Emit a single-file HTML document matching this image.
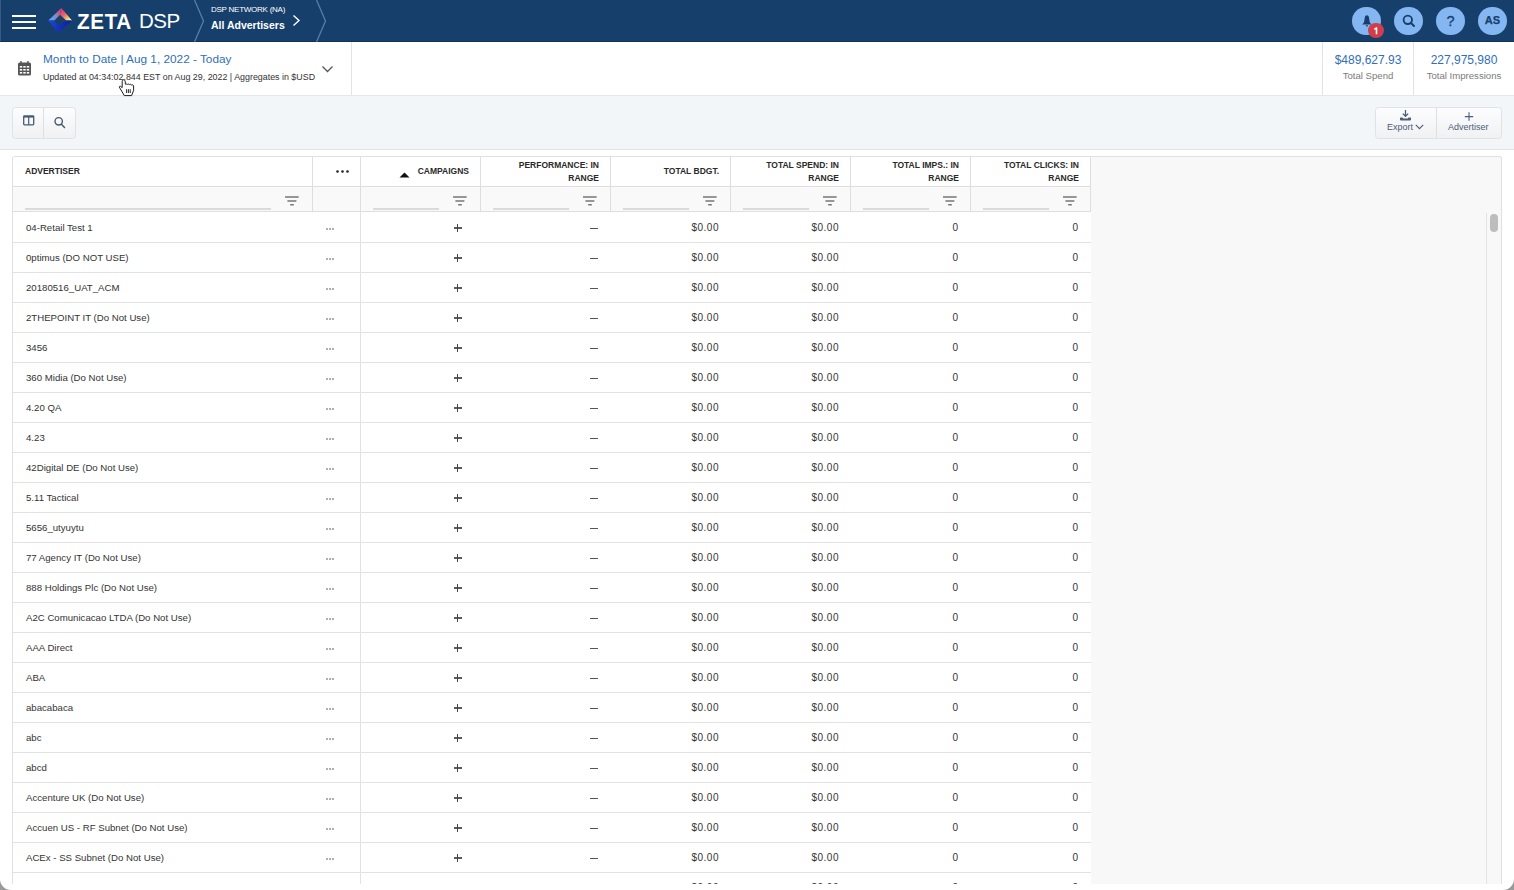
<!DOCTYPE html>
<html><head><meta charset="utf-8"><style>
*{box-sizing:border-box;margin:0;padding:0}
html,body{width:1514px;height:890px;overflow:hidden;background:#fff;font-family:"Liberation Sans",sans-serif;color:#333}
.abs{position:absolute}
#nav{position:absolute;left:0;top:0;width:1514px;height:42px;background:#173f6c;border-bottom:1px solid #11325a}
#nav .edge{position:absolute;left:0;top:0;width:1px;height:41px;background:#3a5a85}
.hb{position:absolute;left:12px;width:24px;height:2px;background:#fff}
#logo-zeta{position:absolute;left:76.5px;top:7.5px;font-size:22.8px;font-weight:700;color:#fff;letter-spacing:0.7px;line-height:26px;transform:scaleX(0.905);transform-origin:0 0}
#logo-dsp{position:absolute;left:139px;top:8.5px;font-size:20.5px;font-weight:400;color:#fff;letter-spacing:-0.5px;line-height:24px}
#net1{position:absolute;left:211px;top:4px;font-size:8px;color:#fff;letter-spacing:-0.25px;line-height:12px}
#net2{position:absolute;left:211px;top:18px;font-size:10.5px;font-weight:700;color:#fff;line-height:14px}
.circ{position:absolute;top:6.5px;width:28.8px;height:28.8px;border-radius:50%;background:#84b7f2}
#badge{position:absolute;left:1368px;top:22.7px;width:15.6px;height:15.6px;border-radius:50%;background:#cf3e4a;color:#fff;font-size:10px;font-weight:700;text-align:center;line-height:15.6px}
#datebar{position:absolute;left:0;top:42px;width:1514px;height:54px;background:#fff;border-bottom:1px solid #e3e6ea}
.vsep{position:absolute;top:42px;width:1px;height:53px;background:#e3e3e3}
#d1{position:absolute;left:43px;top:52px;font-size:11.8px;color:#2f6fba;line-height:15px}
#d2{position:absolute;left:43px;top:71px;font-size:8.9px;color:#333;line-height:12px}
.stat{position:absolute;text-align:center;line-height:14px}
.stat .v{font-size:12px;color:#2f6fba}
.stat .l{font-size:9.6px;color:#7b7b7b;margin-top:2px}
#toolbar{position:absolute;left:0;top:96px;width:1514px;height:54px;background:#f2f6f9;border-bottom:1px solid #e0e3e7}
.btngrp{position:absolute;top:107px;height:32px;border:1px solid #e0e3e6;border-radius:3.5px;background:linear-gradient(#fdfdfe,#eff1f3)}
.btnsep{position:absolute;top:0;width:1px;height:30px;background:#dcdfe3}
#tablewrap{position:absolute;left:12px;top:156px;width:1490px;height:728px;border:1px solid #e0e0e0;border-bottom:0;border-radius:3px 3px 0 0;background:#f8f8f8;overflow:hidden}
#thead{position:absolute;left:0;top:0;width:1078px;height:55px;background:#fff}
.th{position:absolute;top:0;height:30px;border-right:1px solid #dedede;border-bottom:1px solid #dedede;font-size:8.5px;font-weight:700;color:#2a2a2a;letter-spacing:0;line-height:13px;text-align:right}
.th span{position:absolute;right:11px;top:2px;white-space:nowrap}
.th.one span{top:8px}
.tf{position:absolute;top:30px;height:25px;border-right:1px solid #dedede;border-bottom:1px solid #dedede;background:#f9f9f9}
.ul{position:absolute;top:21px;height:2px;background:#dadada}
.flt{position:absolute;top:10px;width:14px;height:10px}
#tbody{position:absolute;left:0;top:55px;width:1078px;height:672px;background:#fff;overflow:hidden}
.row{position:absolute;left:0;width:1078px;height:30px;border-bottom:1px solid #e2e2e2}
.c{position:absolute;top:0;height:29px;line-height:29px;font-size:9.5px;color:#333;white-space:nowrap}
.c.name{left:13px;font-size:9.65px}
.c.dots{left:313px;top:15px;width:2px;height:2px;background:#b0b0b0;box-shadow:3px 0 0 #b0b0b0,6px 0 0 #b0b0b0}
.c.plus{left:347px;width:120px;height:29px;border-left:1px solid #e2e2e2}
.c.plus:before{content:"";position:absolute;left:92.5px;top:14.4px;width:8px;height:1.2px;background:#5a5a5a}
.c.plus:after{content:"";position:absolute;left:96.1px;top:11px;width:1.05px;height:7.7px;background:#444}
.c.dash:before{content:"";position:absolute;left:577px;top:15px;width:8px;height:1px;background:#555}
.c.num{text-align:right;font-size:10px;letter-spacing:0.5px;top:0}
.c4{right:372px}.c5{right:252px}.c6{right:132.5px}.c7{right:12.5px}
#vscroll{position:absolute;left:1473px;top:56px;width:15px;height:680px;border-left:1px solid #e3e3e3;background:#f8f8f8}
#thumb{position:absolute;left:3px;top:1px;width:8px;height:18px;border-radius:4px;background:#bdbdbd}

#vline{position:absolute;left:347px;top:0;width:1px;height:700px;background:#e2e2e2}

</style></head><body>
<div id="nav">
  <div class="edge"></div>
  <div class="hb" style="top:15px"></div><div class="hb" style="top:21px"></div><div class="hb" style="top:27px"></div>
  <svg class="abs" style="left:44px;top:4px" width="32" height="32" viewBox="0 0 32 32">
    <defs>
      <linearGradient id="lg1" x1="4" y1="16" x2="17" y2="4" gradientUnits="userSpaceOnUse">
        <stop offset="0" stop-color="#48b4f4"/><stop offset="0.5" stop-color="#8888b8"/><stop offset="1" stop-color="#d8307a"/>
      </linearGradient>
      <linearGradient id="lg2" x1="17" y1="4" x2="28" y2="16.5" gradientUnits="userSpaceOnUse">
        <stop offset="0" stop-color="#d82a78"/><stop offset="0.45" stop-color="#e86a6a"/><stop offset="0.8" stop-color="#f0e070"/><stop offset="1" stop-color="#ffffff"/>
      </linearGradient>
    </defs>
    <path d="M4.3 16.5 L17.3 4 L16 10.8 L10.4 16.5 Z" fill="url(#lg1)"/>
    <path d="M17.3 4 L28 16.5 L22.3 16.5 L16 10.8 Z" fill="url(#lg2)"/>
    <linearGradient id="lg3" x1="4" y1="16" x2="28" y2="22" gradientUnits="userSpaceOnUse"><stop offset="0" stop-color="#2048e0"/><stop offset="1" stop-color="#0a1a98"/></linearGradient>
    <path d="M4.3 16.5 L28 16.5 L14.4 28.4 Z M10.4 16.5 L14.4 22.3 L22.3 16.5 Z" fill="url(#lg3)" fill-rule="evenodd"/>
  </svg>
  <div id="logo-zeta">ZETA</div>
  <div id="logo-dsp">DSP</div>
  <svg class="abs" style="left:190px;top:0" width="140" height="42" viewBox="0 0 140 42">
    <path d="M4.5 0 L13.5 21 L4.5 42" fill="none" stroke="#5a7cab" stroke-width="1.3"/>
    <path d="M126.5 0 L135.5 21 L126.5 42" fill="none" stroke="#5a7cab" stroke-width="1.3"/>
    <path d="M103.5 15.5 L109 20.5 L103.5 25.5" fill="none" stroke="#fff" stroke-width="1.4"/>
  </svg>
  <div id="net1">DSP NETWORK (NA)</div>
  <div id="net2">All Advertisers</div>
  <div class="circ" style="left:1352px"></div>
  <div class="circ" style="left:1394px"></div>
  <div class="circ" style="left:1436px"></div>
  <div class="circ" style="left:1478px"></div>
  <svg class="abs" style="left:1360px;top:14px" width="14" height="14" viewBox="0 0 14 14">
    <path d="M6.9 1.2 C5.6 1.2 5 2.2 4.8 3.6 L4.2 7.4 C4 8.6 3.2 9.4 2.3 10.2 L2.3 10.6 L11.5 10.6 L11.5 10.2 C10.6 9.4 9.8 8.6 9.6 7.4 L9 3.6 C8.8 2.2 8.2 1.2 6.9 1.2 Z" fill="#173f6c"/>
    <path d="M5.7 11.2 L8.1 11.2 L7.6 12.4 L6.2 12.4 Z" fill="#173f6c"/>
  </svg>
  <div id="badge"><svg style="position:absolute;left:0;top:0" width="16" height="16" viewBox="0 0 16 16"><path d="M6.4 6.3 L8.5 4.9 L8.5 11.3" fill="none" stroke="#fff" stroke-width="1.6" stroke-linejoin="round"/></svg></div>
  <svg class="abs" style="left:1401px;top:13px" width="16" height="16" viewBox="0 0 16 16">
    <circle cx="6.8" cy="6.8" r="4.2" fill="none" stroke="#173f6c" stroke-width="1.9"/>
    <path d="M9.8 9.8 L13 13" stroke="#173f6c" stroke-width="2" stroke-linecap="round"/>
  </svg>
  <div class="abs" style="left:1436px;top:6.8px;width:29px;height:29px;text-align:center;line-height:29px;font-size:14.5px;font-weight:400;color:#173f6c;-webkit-text-stroke:0.3px #173f6c">?</div>
  <div class="abs" style="left:1478px;top:5.8px;width:29px;height:29px;text-align:center;line-height:29px;font-size:11px;font-weight:700;color:#173f6c;-webkit-text-stroke:0.25px #173f6c">AS</div>
</div>

<div id="datebar"></div>
<svg class="abs" style="left:17px;top:60px" width="15" height="16" viewBox="0 0 15 16">
  <path d="M4 1 L4 3 M11 1 L11 3" stroke="#555" stroke-width="1.4"/>
  <rect x="1" y="2.5" width="13" height="13" rx="1.5" fill="#555"/>
  <g fill="#fff">
    <rect x="2.8" y="6" width="2.4" height="1.6"/><rect x="6.3" y="6" width="2.4" height="1.6"/><rect x="9.8" y="6" width="2.4" height="1.6"/>
    <rect x="2.8" y="9" width="2.4" height="1.6"/><rect x="6.3" y="9" width="2.4" height="1.6"/><rect x="9.8" y="9" width="2.4" height="1.6"/>
    <rect x="2.8" y="12" width="2.4" height="1.6"/><rect x="6.3" y="12" width="2.4" height="1.6"/><rect x="9.8" y="12" width="2.4" height="1.6"/>
  </g>
</svg>
<div id="d1">Month to Date | Aug 1, 2022 - Today</div>
<div id="d2">Updated at 04:34:02.844 EST on Aug 29, 2022 | Aggregates in $USD</div>
<svg class="abs" style="left:117px;top:78px;z-index:50" width="18" height="19" viewBox="0 0 18 19">
  <path d="M6.5 1.8 C5.6 1.8 5.2 2.6 5.2 3.4 L5.2 9.6 L3.6 8.4 C3 8 2.2 8.3 2.3 9.1 L7.3 17.6 L14.6 17.6 L16.6 12.4 L16.6 7.9 C16.6 7 15.2 6.6 14.5 7.1 C14.3 6.2 12.9 6 12.4 6.7 C12.1 5.9 10.8 5.8 10.3 6.5 C10.2 6.1 9.6 6 8.4 6.2 L8.2 3.4 C8.1 2.4 7.5 1.8 6.5 1.8 Z" fill="#fff" stroke="#111" stroke-width="0.95" stroke-linejoin="round"/>
  <path d="M9.6 11.2 L9.6 15 M11.4 11.2 L11.4 15 M13.2 11.2 L13.2 15" stroke="#111" stroke-width="0.9"/>
</svg>
<svg class="abs" style="left:321px;top:65px" width="13" height="9" viewBox="0 0 13 9">
  <path d="M1.5 1.5 L6.5 6.5 L11.5 1.5" fill="none" stroke="#555" stroke-width="1.3"/>
</svg>
<div class="vsep" style="left:351px"></div>
<div class="vsep" style="left:1322px"></div>
<div class="vsep" style="left:1413px"></div>
<div class="stat" style="left:1323px;top:53px;width:90px"><div class="v">$489,627.93</div><div class="l">Total Spend</div></div>
<div class="stat" style="left:1414px;top:53px;width:100px"><div class="v">227,975,980</div><div class="l">Total Impressions</div></div>

<div id="toolbar"></div>
<div class="btngrp" style="left:12px;width:64px"><div class="btnsep" style="left:30px"></div></div>
<svg class="abs" style="left:23px;top:115px" width="12" height="11" viewBox="0 0 12 11">
  <rect x="0.7" y="0.8" width="10" height="9" rx="0.8" fill="none" stroke="#4a5a70" stroke-width="1.3"/>
  <path d="M0.7 1.8 L10.7 1.8" stroke="#4a5a70" stroke-width="1.6"/>
  <path d="M5.7 1.5 L5.7 9.8" stroke="#4a5a70" stroke-width="1.2"/>
</svg>
<svg class="abs" style="left:53px;top:116px" width="13" height="13" viewBox="0 0 13 13">
  <circle cx="5.7" cy="5.3" r="3.7" fill="none" stroke="#4a5a70" stroke-width="1.4"/>
  <path d="M8.4 8.2 L11.5 11.4" stroke="#4a5a70" stroke-width="1.5" stroke-linecap="round"/>
</svg>
<div class="btngrp" style="left:1375px;width:127px"><div class="btnsep" style="left:60px"></div></div>
<svg class="abs" style="left:1399px;top:109px" width="13" height="13" viewBox="0 0 13 13">
  <path d="M6.5 1 L6.5 7 M3.8 4.6 L6.5 7.3 L9.2 4.6" fill="none" stroke="#4e5e76" stroke-width="1.3"/>
  <path d="M1 9 L1 10.6 Q1 11.6 2 11.6 L11 11.6 Q12 11.6 12 10.6 L12 9 Q12 8.6 11.6 8.6 L9.6 8.6 L8.6 9.6 L4.4 9.6 L3.4 8.6 L1.4 8.6 Q1 8.6 1 9 Z" fill="#4e5e76"/>
</svg>
<div class="abs" style="left:1387px;top:122px;font-size:9px;color:#4e5e76;line-height:11px">Export</div>
<svg class="abs" style="left:1415px;top:124px" width="9" height="6" viewBox="0 0 9 6">
  <path d="M0.8 0.8 L4.5 4.6 L8.2 0.8" fill="none" stroke="#4e5e76" stroke-width="1.1"/>
</svg>
<svg class="abs" style="left:1464px;top:112px" width="10" height="10" viewBox="0 0 10 10">
  <path d="M5 0.3 L5 8.8 M0.8 4.6 L9.2 4.6" stroke="#4e5e76" stroke-width="1.1"/>
</svg>
<div class="abs" style="left:1448px;top:122px;font-size:9px;color:#4e5e76;line-height:11px">Advertiser</div>

<div id="tablewrap">
  <div id="thead">
    <div class="th" style="left:0;width:300px;text-align:left"><span style="left:12px;right:auto;top:8px">ADVERTISER</span></div>
    <div class="th" style="left:300px;width:48px"></div>
    <div class="th one" style="left:348px;width:120px"><span>CAMPAIGNS</span></div>
    <div class="th" style="left:468px;width:130px"><span>PERFORMANCE: IN<br>RANGE</span></div>
    <div class="th one" style="left:598px;width:120px"><span>TOTAL BDGT.</span></div>
    <div class="th" style="left:718px;width:120px"><span>TOTAL SPEND: IN<br>RANGE</span></div>
    <div class="th" style="left:838px;width:120px"><span>TOTAL IMPS.: IN<br>RANGE</span></div>
    <div class="th" style="left:958px;width:120px"><span>TOTAL CLICKS: IN<br>RANGE</span></div>
    <svg class="abs" style="left:323px;top:13px" width="14" height="4" viewBox="0 0 14 4">
      <circle cx="1.5" cy="1.5" r="1.3" fill="#222"/><circle cx="6.5" cy="1.5" r="1.3" fill="#222"/><circle cx="11.5" cy="1.5" r="1.3" fill="#222"/>
    </svg>
    <svg class="abs" style="left:386px;top:15px" width="11" height="6" viewBox="0 0 11 6">
      <path d="M0.5 5.5 L5.5 0.5 L10.5 5.5 Z" fill="#111"/>
    </svg>
    <div class="tf" style="left:0;width:300px"><div class="ul" style="left:12px;width:246px"></div></div>
    <div class="tf" style="left:300px;width:48px"></div>
    <div class="tf" style="left:348px;width:120px"><div class="ul" style="left:12px;width:66px"></div></div>
    <div class="tf" style="left:468px;width:130px"><div class="ul" style="left:12px;width:76px"></div></div>
    <div class="tf" style="left:598px;width:120px"><div class="ul" style="left:12px;width:66px"></div></div>
    <div class="tf" style="left:718px;width:120px"><div class="ul" style="left:12px;width:66px"></div></div>
    <div class="tf" style="left:838px;width:120px"><div class="ul" style="left:12px;width:66px"></div></div>
    <div class="tf" style="left:958px;width:120px"><div class="ul" style="left:12px;width:66px"></div></div>
<svg class="abs" style="left:272px;top:39px" width="14" height="10" viewBox="0 0 14 10"><path d="M0 1.1 L13.7 1.1 M2.4 4.9 L11.4 4.9 M5.2 8.7 L8.8 8.7" stroke="#777" stroke-width="1.5"/></svg>
<svg class="abs" style="left:440px;top:39px" width="14" height="10" viewBox="0 0 14 10"><path d="M0 1.1 L13.7 1.1 M2.4 4.9 L11.4 4.9 M5.2 8.7 L8.8 8.7" stroke="#777" stroke-width="1.5"/></svg>
<svg class="abs" style="left:570px;top:39px" width="14" height="10" viewBox="0 0 14 10"><path d="M0 1.1 L13.7 1.1 M2.4 4.9 L11.4 4.9 M5.2 8.7 L8.8 8.7" stroke="#777" stroke-width="1.5"/></svg>
<svg class="abs" style="left:690px;top:39px" width="14" height="10" viewBox="0 0 14 10"><path d="M0 1.1 L13.7 1.1 M2.4 4.9 L11.4 4.9 M5.2 8.7 L8.8 8.7" stroke="#777" stroke-width="1.5"/></svg>
<svg class="abs" style="left:810px;top:39px" width="14" height="10" viewBox="0 0 14 10"><path d="M0 1.1 L13.7 1.1 M2.4 4.9 L11.4 4.9 M5.2 8.7 L8.8 8.7" stroke="#777" stroke-width="1.5"/></svg>
<svg class="abs" style="left:930px;top:39px" width="14" height="10" viewBox="0 0 14 10"><path d="M0 1.1 L13.7 1.1 M2.4 4.9 L11.4 4.9 M5.2 8.7 L8.8 8.7" stroke="#777" stroke-width="1.5"/></svg>
<svg class="abs" style="left:1050px;top:39px" width="14" height="10" viewBox="0 0 14 10"><path d="M0 1.1 L13.7 1.1 M2.4 4.9 L11.4 4.9 M5.2 8.7 L8.8 8.7" stroke="#777" stroke-width="1.5"/></svg>
  </div>
  <div id="tbody">
<div class="row" style="top:1px">
<div class="c name">04-Retail Test 1</div><div class="c dots"></div><div class="c plus"></div><div class="c dash"></div><div class="c num c4">$0.00</div><div class="c num c5">$0.00</div><div class="c num c6">0</div><div class="c num c7">0</div>
</div>
<div class="row" style="top:31px">
<div class="c name">0ptimus (DO NOT USE)</div><div class="c dots"></div><div class="c plus"></div><div class="c dash"></div><div class="c num c4">$0.00</div><div class="c num c5">$0.00</div><div class="c num c6">0</div><div class="c num c7">0</div>
</div>
<div class="row" style="top:61px">
<div class="c name">20180516_UAT_ACM</div><div class="c dots"></div><div class="c plus"></div><div class="c dash"></div><div class="c num c4">$0.00</div><div class="c num c5">$0.00</div><div class="c num c6">0</div><div class="c num c7">0</div>
</div>
<div class="row" style="top:91px">
<div class="c name">2THEPOINT IT (Do Not Use)</div><div class="c dots"></div><div class="c plus"></div><div class="c dash"></div><div class="c num c4">$0.00</div><div class="c num c5">$0.00</div><div class="c num c6">0</div><div class="c num c7">0</div>
</div>
<div class="row" style="top:121px">
<div class="c name">3456</div><div class="c dots"></div><div class="c plus"></div><div class="c dash"></div><div class="c num c4">$0.00</div><div class="c num c5">$0.00</div><div class="c num c6">0</div><div class="c num c7">0</div>
</div>
<div class="row" style="top:151px">
<div class="c name">360 Midia (Do Not Use)</div><div class="c dots"></div><div class="c plus"></div><div class="c dash"></div><div class="c num c4">$0.00</div><div class="c num c5">$0.00</div><div class="c num c6">0</div><div class="c num c7">0</div>
</div>
<div class="row" style="top:181px">
<div class="c name">4.20 QA</div><div class="c dots"></div><div class="c plus"></div><div class="c dash"></div><div class="c num c4">$0.00</div><div class="c num c5">$0.00</div><div class="c num c6">0</div><div class="c num c7">0</div>
</div>
<div class="row" style="top:211px">
<div class="c name">4.23</div><div class="c dots"></div><div class="c plus"></div><div class="c dash"></div><div class="c num c4">$0.00</div><div class="c num c5">$0.00</div><div class="c num c6">0</div><div class="c num c7">0</div>
</div>
<div class="row" style="top:241px">
<div class="c name">42Digital DE (Do Not Use)</div><div class="c dots"></div><div class="c plus"></div><div class="c dash"></div><div class="c num c4">$0.00</div><div class="c num c5">$0.00</div><div class="c num c6">0</div><div class="c num c7">0</div>
</div>
<div class="row" style="top:271px">
<div class="c name">5.11 Tactical</div><div class="c dots"></div><div class="c plus"></div><div class="c dash"></div><div class="c num c4">$0.00</div><div class="c num c5">$0.00</div><div class="c num c6">0</div><div class="c num c7">0</div>
</div>
<div class="row" style="top:301px">
<div class="c name">5656_utyuytu</div><div class="c dots"></div><div class="c plus"></div><div class="c dash"></div><div class="c num c4">$0.00</div><div class="c num c5">$0.00</div><div class="c num c6">0</div><div class="c num c7">0</div>
</div>
<div class="row" style="top:331px">
<div class="c name">77 Agency IT (Do Not Use)</div><div class="c dots"></div><div class="c plus"></div><div class="c dash"></div><div class="c num c4">$0.00</div><div class="c num c5">$0.00</div><div class="c num c6">0</div><div class="c num c7">0</div>
</div>
<div class="row" style="top:361px">
<div class="c name">888 Holdings Plc (Do Not Use)</div><div class="c dots"></div><div class="c plus"></div><div class="c dash"></div><div class="c num c4">$0.00</div><div class="c num c5">$0.00</div><div class="c num c6">0</div><div class="c num c7">0</div>
</div>
<div class="row" style="top:391px">
<div class="c name">A2C Comunicacao LTDA (Do Not Use)</div><div class="c dots"></div><div class="c plus"></div><div class="c dash"></div><div class="c num c4">$0.00</div><div class="c num c5">$0.00</div><div class="c num c6">0</div><div class="c num c7">0</div>
</div>
<div class="row" style="top:421px">
<div class="c name">AAA Direct</div><div class="c dots"></div><div class="c plus"></div><div class="c dash"></div><div class="c num c4">$0.00</div><div class="c num c5">$0.00</div><div class="c num c6">0</div><div class="c num c7">0</div>
</div>
<div class="row" style="top:451px">
<div class="c name">ABA</div><div class="c dots"></div><div class="c plus"></div><div class="c dash"></div><div class="c num c4">$0.00</div><div class="c num c5">$0.00</div><div class="c num c6">0</div><div class="c num c7">0</div>
</div>
<div class="row" style="top:481px">
<div class="c name">abacabaca</div><div class="c dots"></div><div class="c plus"></div><div class="c dash"></div><div class="c num c4">$0.00</div><div class="c num c5">$0.00</div><div class="c num c6">0</div><div class="c num c7">0</div>
</div>
<div class="row" style="top:511px">
<div class="c name">abc</div><div class="c dots"></div><div class="c plus"></div><div class="c dash"></div><div class="c num c4">$0.00</div><div class="c num c5">$0.00</div><div class="c num c6">0</div><div class="c num c7">0</div>
</div>
<div class="row" style="top:541px">
<div class="c name">abcd</div><div class="c dots"></div><div class="c plus"></div><div class="c dash"></div><div class="c num c4">$0.00</div><div class="c num c5">$0.00</div><div class="c num c6">0</div><div class="c num c7">0</div>
</div>
<div class="row" style="top:571px">
<div class="c name">Accenture UK (Do Not Use)</div><div class="c dots"></div><div class="c plus"></div><div class="c dash"></div><div class="c num c4">$0.00</div><div class="c num c5">$0.00</div><div class="c num c6">0</div><div class="c num c7">0</div>
</div>
<div class="row" style="top:601px">
<div class="c name">Accuen US - RF Subnet (Do Not Use)</div><div class="c dots"></div><div class="c plus"></div><div class="c dash"></div><div class="c num c4">$0.00</div><div class="c num c5">$0.00</div><div class="c num c6">0</div><div class="c num c7">0</div>
</div>
<div class="row" style="top:631px">
<div class="c name">ACEx - SS Subnet (Do Not Use)</div><div class="c dots"></div><div class="c plus"></div><div class="c dash"></div><div class="c num c4">$0.00</div><div class="c num c5">$0.00</div><div class="c num c6">0</div><div class="c num c7">0</div>
</div>
<div class="row" style="top:661px">
<div class="c name"></div><div class="c dots"></div><div class="c plus"></div><div class="c dash"></div><div class="c num c4">$0.00</div><div class="c num c5">$0.00</div><div class="c num c6">0</div><div class="c num c7">0</div>
</div>
<div id="vline"></div>
  </div>
  <div id="vscroll"><div id="thumb"></div></div>
</div>
<svg class="abs" style="left:0;top:879px;z-index:60" width="11" height="11" viewBox="0 0 11 11"><path d="M0 0 L0 11 L11 11 A11 11 0 0 1 0 0 Z" fill="#9a9a9a"/></svg>
<svg class="abs" style="left:1503px;top:879px;z-index:60" width="11" height="11" viewBox="0 0 11 11"><path d="M11 0 L11 11 L0 11 A11 11 0 0 0 11 0 Z" fill="#9a9a9a"/></svg>
</body></html>
